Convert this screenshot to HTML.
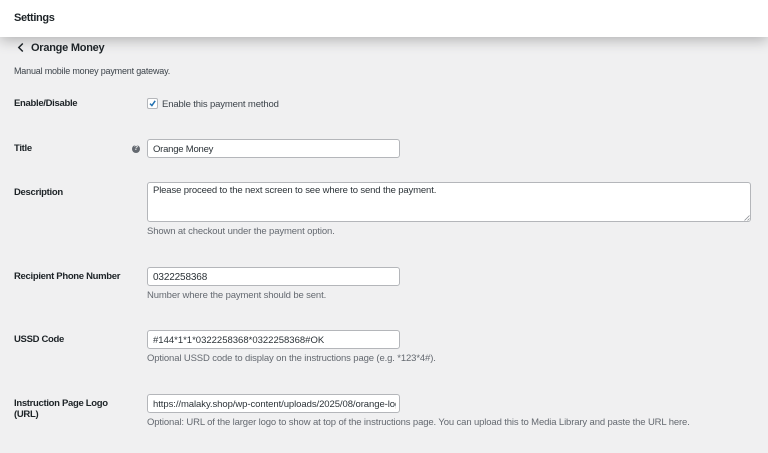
<!DOCTYPE html>
<html><head><meta charset="utf-8"><style>
html,body{margin:0;padding:0}
body{width:768px;height:453px;overflow:hidden;position:relative;background:#f0f0f1;font-family:"Liberation Sans",sans-serif;color:#3c434a;font-size:9.5px}
#w{position:absolute;left:0;top:0;width:768px;height:453px;filter:blur(.3px)}
.t{position:absolute;white-space:nowrap;line-height:12px}
.b{font-weight:700;color:#1d2327;font-size:9.5px;letter-spacing:-.31px}
.d{color:#646970;font-size:9.5px;letter-spacing:-.13px}
.i{position:absolute;box-sizing:border-box;left:147px;width:253px;height:19px;background:#fff;border:1px solid #b4b6ba;border-radius:3px;font-size:9.5px;line-height:20px;padding-left:5px;color:#2c3338;white-space:nowrap;overflow:hidden}
</style></head><body><div id="w">
<div style="position:absolute;left:0;top:0;width:768px;height:37px;background:#fff;box-shadow:0 3px 14px rgba(0,0,0,.27)"></div>
<div class="t" style="left:14px;top:12px;font-weight:700;font-size:11px;letter-spacing:-.36px;color:#1d2327">Settings</div>
<svg style="position:absolute;left:16px;top:42px" width="10" height="11" viewBox="0 0 10 11"><path d="M6.8 1.5L2.8 5.5L6.8 9.5" fill="none" stroke="#1d2327" stroke-width="1.5"/></svg>
<div class="t" style="left:31px;top:42px;font-weight:700;font-size:11px;letter-spacing:-.25px;color:#1d2327">Orange Money</div>
<div class="t" style="left:14px;top:65px;font-size:9px;letter-spacing:-.19px">Manual mobile money payment gateway.</div>

<div class="t b" style="left:14px;top:98px">Enable/Disable</div>
<div style="position:absolute;box-sizing:border-box;left:147px;top:98px;width:11px;height:11px;background:#fff;border:1px solid #b4b6ba;border-radius:2px"></div>
<svg style="position:absolute;left:147px;top:98px" width="11" height="11" viewBox="0 0 11 11"><path d="M3 5.6L4.9 7.6L8.2 2.8" fill="none" stroke="#2271b1" stroke-width="1.5"/></svg>
<div class="t" style="left:162px;top:99px;letter-spacing:-.14px">Enable this payment method</div>

<div class="t b" style="left:14px;top:143px">Title</div>
<div style="position:absolute;left:132px;top:145px;width:8px;height:8px;border-radius:50%;background:#646970"></div>
<div class="t" style="left:132px;top:145px;width:8px;text-align:center;font-size:7px;line-height:8px;font-weight:700;color:#f0f0f1">?</div>
<div class="i" style="top:139px;letter-spacing:-.22px">Orange Money</div>

<div class="t b" style="left:14px;top:187px">Description</div>
<div style="position:absolute;box-sizing:border-box;left:147px;top:182px;width:604px;height:40px;background:#fff;border:1px solid #b4b6ba;border-radius:3px"></div>
<svg style="position:absolute;left:744px;top:215px" width="6" height="6" viewBox="0 0 6 6"><path d="M0.5 5.5L5.5 0.5M3.5 5.5L5.5 3.5" stroke="#8c8f94" stroke-width="0.8"/></svg>
<div class="t" style="left:153px;top:185px;color:#2c3338;letter-spacing:-.14px">Please proceed to the next screen to see where to send the payment.</div>
<div class="t d" style="left:147px;top:226px">Shown at checkout under the payment option.</div>

<div class="t b" style="left:14px;top:271px">Recipient Phone Number</div>
<div class="i" style="top:266.5px;font-size:10px;letter-spacing:-.15px">0322258368</div>
<div class="t d" style="left:147px;top:290px">Number where the payment should be sent.</div>

<div class="t b" style="left:14px;top:334px">USSD Code</div>
<div class="i" style="top:330px">#144*1*1*0322258368*0322258368#OK</div>
<div class="t d" style="left:147px;top:353px">Optional USSD code to display on the instructions page (e.g. *123*4#).</div>

<div class="t b" style="left:14px;top:398px">Instruction Page Logo</div>
<div class="t b" style="left:14px;top:409px">(URL)</div>
<div class="i" style="top:394px;letter-spacing:-.07px"><span style="display:block;width:243px;overflow:hidden">https://malaky.shop/wp-content/uploads/2025/08/orange-logo.png</span></div>
<div class="t d" style="left:147px;top:417px">Optional: URL of the larger logo to show at top of the instructions page. You can upload this to Media Library and paste the URL here.</div>
</div></body></html>
